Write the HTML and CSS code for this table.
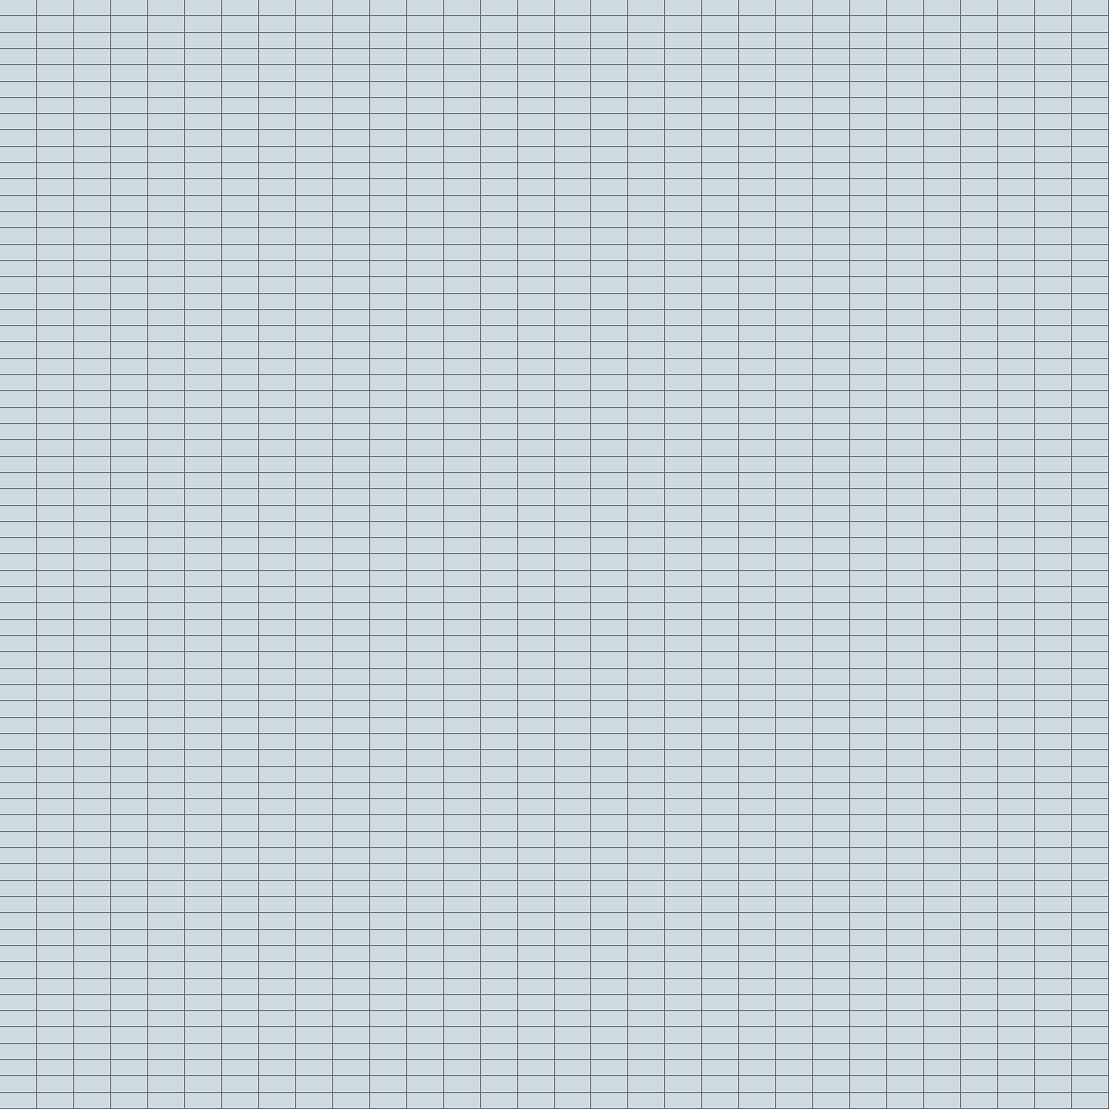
FILE: index.html
```html
<!DOCTYPE html>
<html lang="en">
<head>
  <meta charset="UTF-8">
  <meta name="viewport" content="width=device-width, initial-scale=1.0">
  <title>Grid</title>
  <link rel="stylesheet" href="styles.css">
</head>
<body>
  <div class="grid" id="grid"></div>

  <script>
    const grid = document.getElementById('grid');
    const cols = 30;
    const rows = 68;

    for (let i = 0; i < cols * rows; i++) {
      const cell = document.createElement('div');
      cell.className = 'cell';
      grid.appendChild(cell);
    }
  </script>
</body>
</html>
```

FILE: styles.css
```css
html, body {
  margin: 0;
  padding: 0;
  background: #cddbe1;
  overflow: hidden;
}

.grid {
  width: 1109px;
  height: 1109px;
  display: grid;
  grid-template-columns: repeat(30, 1fr);
  grid-template-rows: repeat(68, 1fr);
}

.cell {
  background: #cddbe1;
  border-right: 1px solid #6f6579;
  border-bottom: 1px solid #6f6579;
  box-shadow: inset -1px -1px 0 #dfe8ee;
}
```
